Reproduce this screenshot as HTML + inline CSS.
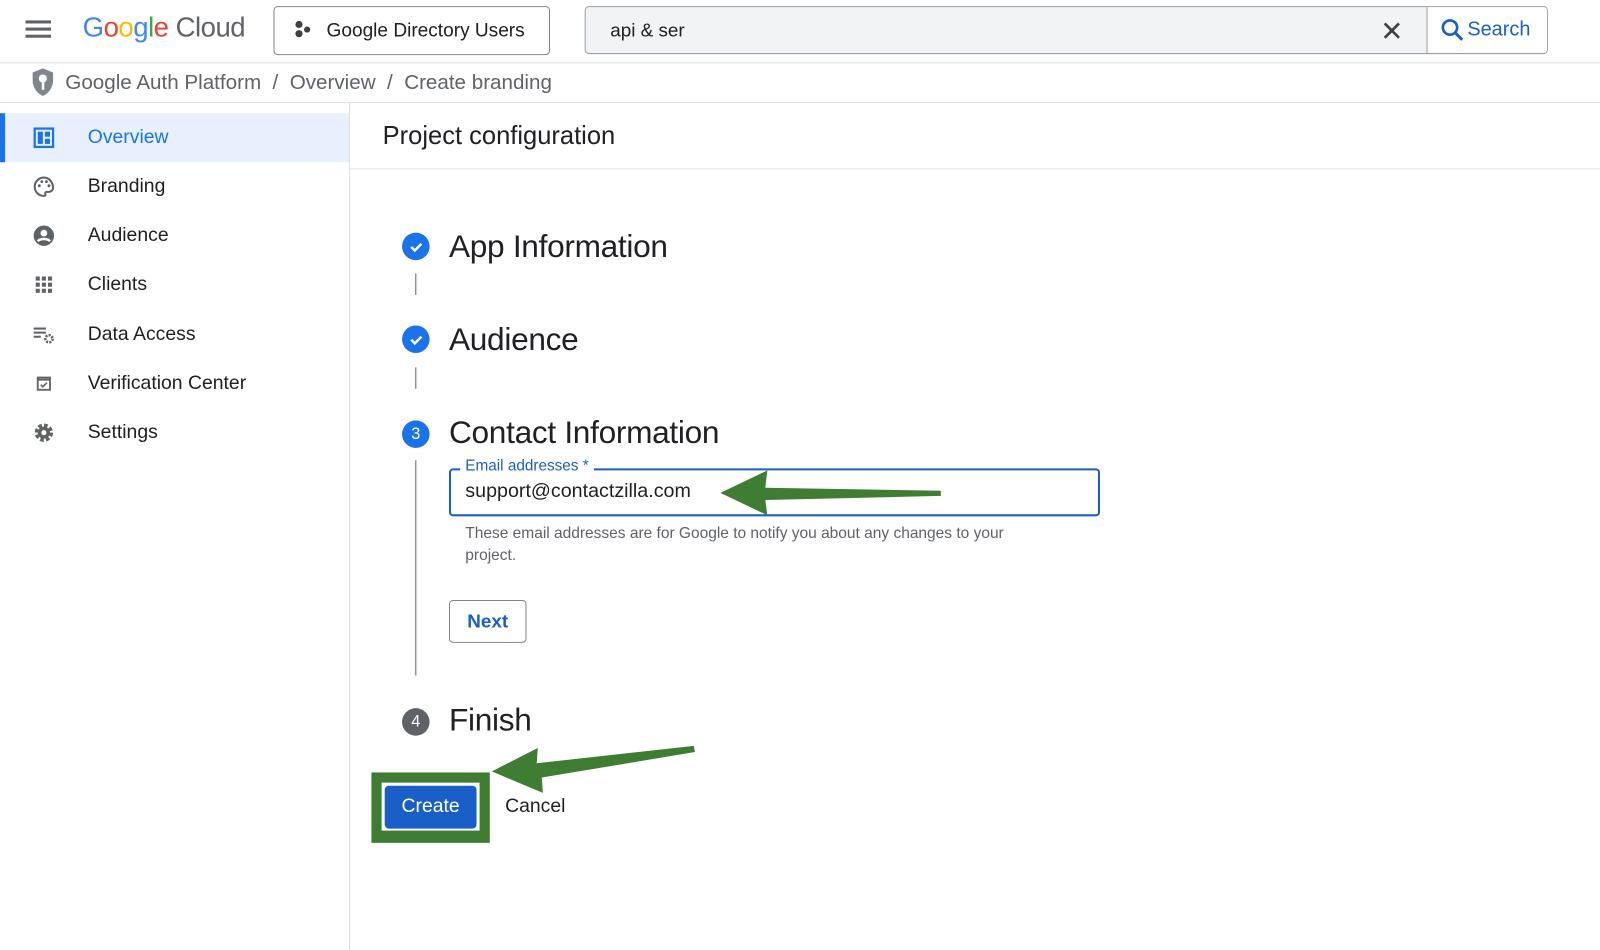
<!DOCTYPE html>
<html><head><meta charset="utf-8"><style>
*{box-sizing:border-box;margin:0;padding:0}
body{width:1600px;height:931px;overflow:hidden;background:#fff;font-family:"Liberation Sans",sans-serif;color:#202124;position:relative}
#w{position:absolute;left:0;top:0;width:1568px;height:913px;transform:scale(1.0204);transform-origin:0 0}
.abs{position:absolute}
.nav{position:absolute;left:0;width:342px;height:48px;display:flex;align-items:center;font-size:19px;color:#202124}
.nav .ic{position:absolute;left:31px;top:12px;width:24px;height:24px}
.nav span{position:absolute;left:86px}
.step{position:absolute;left:394px;width:27px;height:27px;border-radius:50%;background:#1a73e8;color:#fff;font-size:16px;display:flex;align-items:center;justify-content:center}
.st{position:absolute;left:440px;font-size:31px;color:#202124;letter-spacing:-0.3px}
.vl{position:absolute;left:407px;width:1px;background:#5f6368}
</style></head><body><div id="w">
<div class="abs" style="left:25px;top:20px;width:25px;height:3px;background:#5f6368;box-shadow:0 7px 0 #5f6368,0 14px 0 #5f6368"></div>
<div class="abs" style="left:81px;top:12px;font-size:27px;letter-spacing:-0.5px"><span style="color:#4285f4">G</span><span style="color:#ea4335">o</span><span style="color:#fbbc05">o</span><span style="color:#4285f4">g</span><span style="color:#34a853">l</span><span style="color:#ea4335">e</span><span style="color:#5f6368"> Cloud</span></div>
<div class="abs" style="left:268px;top:6px;width:271px;height:48px;border:1px solid #80868b;border-radius:4px"></div>
<svg class="abs" style="left:287px;top:19px" width="20" height="20"><circle cx="6" cy="5" r="3.5" fill="#3c4043"/><circle cx="6" cy="14" r="3.5" fill="#3c4043"/><circle cx="14" cy="10" r="3" fill="#3c4043"/></svg>
<div class="abs" style="left:320px;top:19px;font-size:18.7px;color:#202124">Google Directory Users</div>
<div class="abs" style="left:573px;top:6px;width:944px;height:47px;border:1px solid #9aa0a6;border-radius:4px;background:#f1f3f4;overflow:hidden">
<div class="abs" style="left:824px;top:0;width:120px;height:47px;background:#fff;border-left:1px solid #9aa0a6"></div></div>
<div class="abs" style="left:598px;top:19px;font-size:18.5px">api &amp; ser</div>
<svg class="abs" style="left:1354px;top:20px" width="20" height="20"><path d="M3 3L17 17M17 3L3 17" stroke="#3c4043" stroke-width="2.6"/></svg>
<svg class="abs" style="left:1411px;top:17px" width="26" height="26"><circle cx="10" cy="10" r="7" stroke="#1a5fc7" stroke-width="2.6" fill="none"/><path d="M15 15L22 22" stroke="#1a5fc7" stroke-width="3"/></svg>
<div class="abs" style="left:1438px;top:18px;font-size:19.5px;color:#1a5fc7">Search</div>
<div class="abs" style="left:0;top:61px;width:1600px;height:1px;background:#e0e0e0"></div>
<svg class="abs" style="left:30px;top:66px" width="24" height="30"><path d="M12 1L2 5v8c0 7 5 13 10 15 5-2 10-8 10-15V5z" fill="#80868b"/><circle cx="12" cy="11" r="4" fill="#fff"/><rect x="11" y="13" width="2.4" height="9" fill="#fff"/></svg>
<div class="abs" style="left:64px;top:70px;font-size:20.2px;color:#5f6368">Google Auth Platform &nbsp;/&nbsp; Overview &nbsp;/&nbsp; Create branding</div>
<div class="abs" style="left:0;top:100px;width:1600px;height:1px;background:#e0e0e0"></div>
<div class="abs" style="left:342px;top:101px;width:1px;height:830px;background:#e0e0e0"></div>
<div class="abs" style="left:0;top:111px;width:342px;height:48px;background:#e8f0fe"></div>
<div class="abs" style="left:0;top:111px;width:5px;height:48px;background:#1a73e8"></div>
<div class="nav" style="top:111px"><svg class="ic" viewBox="0 0 24 24"><rect x="3" y="3" width="18" height="18" fill="none" stroke="#1a73e8" stroke-width="2.2"/><rect x="6" y="6" width="5" height="12" fill="#1a73e8"/><rect x="13" y="6" width="5" height="5" fill="#1a73e8"/><rect x="13" y="13" width="5" height="5" fill="#1a73e8"/></svg><span style="color:#1a73e8">Overview</span></div>
<div class="nav" style="top:159px"><svg class="ic" viewBox="0 0 24 24"><path d="M12 3a9 9 0 000 18c1.5 0 2-1 1.5-2s0-2 1.5-2h2a4 4 0 004-4c0-5.5-4-10-9-10z" fill="none" stroke="#5f6368" stroke-width="2"/><circle cx="7.5" cy="11" r="1.4" fill="#5f6368"/><circle cx="10" cy="7" r="1.4" fill="#5f6368"/><circle cx="14.5" cy="7" r="1.4" fill="#5f6368"/><circle cx="17" cy="11" r="1.4" fill="#5f6368"/></svg><span>Branding</span></div>
<div class="nav" style="top:207px"><svg class="ic" viewBox="0 0 24 24"><circle cx="12" cy="12" r="10" fill="#5f6368"/><circle cx="12" cy="9.5" r="3.3" fill="#fff"/><path d="M6 17.5c2-3 10-3 12 0" stroke="#fff" stroke-width="2.4" fill="none"/></svg><span>Audience</span></div>
<div class="nav" style="top:255px"><svg class="ic" viewBox="0 0 24 24" fill="#5f6368"><rect x="4" y="4" width="4" height="4"/><rect x="10" y="4" width="4" height="4"/><rect x="16" y="4" width="4" height="4"/><rect x="4" y="10" width="4" height="4"/><rect x="10" y="10" width="4" height="4"/><rect x="16" y="10" width="4" height="4"/><rect x="4" y="16" width="4" height="4"/><rect x="10" y="16" width="4" height="4"/><rect x="16" y="16" width="4" height="4"/></svg><span>Clients</span></div>
<div class="nav" style="top:304px"><svg class="ic" viewBox="0 0 24 24"><path d="M2 6h12M2 10h12M2 14h7" stroke="#5f6368" stroke-width="2"/><circle cx="17" cy="16" r="3.5" fill="none" stroke="#5f6368" stroke-width="2.5" stroke-dasharray="2 1.2"/></svg><span>Data Access</span></div>
<div class="nav" style="top:352px"><svg class="ic" viewBox="0 0 24 24"><rect x="6" y="6" width="12" height="12" fill="none" stroke="#5f6368" stroke-width="1.8"/><path d="M6 8h12" stroke="#5f6368" stroke-width="2"/><path d="M9 13l2 2 4-4" stroke="#5f6368" stroke-width="1.6" fill="none"/></svg><span>Verification Center</span></div>
<div class="nav" style="top:400px"><svg class="ic" viewBox="0 0 24 24"><circle cx="12" cy="12" r="6.5" fill="none" stroke="#5f6368" stroke-width="5" stroke-dasharray="3.2 1.9"/><circle cx="12" cy="12" r="6" fill="#5f6368"/><circle cx="12" cy="12" r="2.5" fill="#fff"/></svg><span>Settings</span></div>
<div class="abs" style="left:375px;top:119px;font-size:25px;color:#202124">Project configuration</div>
<div class="abs" style="left:343px;top:165px;width:1257px;height:1px;background:#e0e0e0"></div>
<div class="step" style="top:228px"><svg width="16" height="16"><path d="M3 8l3.5 3.5L13 5" stroke="#fff" stroke-width="2.4" fill="none"/></svg></div>
<div class="st" style="top:224px">App Information</div>
<div class="vl" style="top:268px;height:21px"></div>
<div class="step" style="top:319px"><svg width="16" height="16"><path d="M3 8l3.5 3.5L13 5" stroke="#fff" stroke-width="2.4" fill="none"/></svg></div>
<div class="st" style="top:315px">Audience</div>
<div class="vl" style="top:360px;height:21px"></div>
<div class="step" style="top:412px">3</div>
<div class="st" style="top:406px">Contact Information</div>
<div class="vl" style="top:451px;height:211px"></div>
<div class="abs" style="left:440px;top:459px;width:638px;height:47px;border:2px solid #1a5fc7;border-radius:4px"></div>
<div class="abs" style="left:451px;top:448px;padding:0 5px;background:#fff;font-size:15px;color:#1a5fc7">Email addresses *</div>
<div class="abs" style="left:456px;top:471px;font-size:19.3px">support@contactzilla.com</div>
<div class="abs" style="left:456px;top:512px;font-size:15.2px;color:#5f6368;line-height:22px;width:580px">These email addresses are for Google to notify you about any changes to your project.</div>
<div class="abs" style="left:440px;top:588px;width:76px;height:42px;border:1px solid #80868b;border-radius:4px;color:#1a5fc7;font-size:18.5px;font-weight:bold;display:flex;align-items:center;justify-content:center">Next</div>
<div class="step" style="top:694px;background:#5f6368">4</div>
<div class="st" style="top:688px">Finish</div>
<div class="abs" style="left:364px;top:757px;width:116px;height:69px;background:#3f7d32"></div>
<div class="abs" style="left:374px;top:767px;width:96px;height:47px;background:#fff"></div>
<div class="abs" style="left:377px;top:770px;width:90px;height:42px;background:#1a5fc7;border-radius:4px;color:#fff;font-size:19px;display:flex;align-items:center;justify-content:center">Create</div>
<div class="abs" style="left:495px;top:780px;font-size:19px">Cancel</div>
<svg class="abs" style="left:0;top:0" width="1600" height="931"><path d="M706 483L752 461L750 478L922 481L922 486L750 490L752 505Z" fill="#3f7d32"/><path d="M482 756L527 733L526 748L680 731L681 737L531 762L532 777Z" fill="#3f7d32"/></svg>
</div></body></html>
